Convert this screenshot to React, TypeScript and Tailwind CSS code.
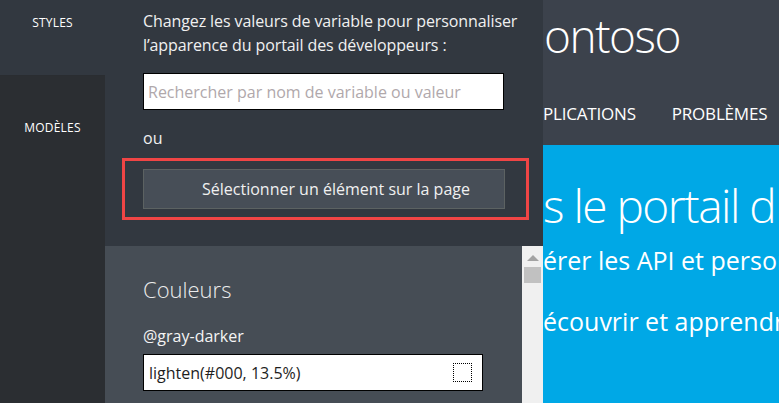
import React from "react";

const NavItem = ({ label, className }: { label: string; className: string }) => (
  <div className={className}>
    <span className="text-[12px] text-white tracking-[0.2px]">{label}</span>
  </div>
);

const Scrollbar = () => (
  <div className="w-[21px] bg-[#f0f0f0] flex flex-col items-center pt-[9px]">
    <svg width="12" height="6" viewBox="0 0 12 6">
      <path d="M6 0 L12 6 L0 6 Z" fill="#a3a3a3" />
    </svg>
    <div className="mt-[6px] w-[17px] h-[16px] bg-[#c1c1c1]" />
  </div>
);

export default function App() {
  return (
    <div className="flex w-[779px] h-[403px] overflow-hidden font-['Open_Sans',sans-serif]">
      {/* left nav */}
      <div className="w-[105px] flex flex-col shrink-0">
        <NavItem
          label="STYLES"
          className="h-[76px] bg-[#323840] flex justify-center pt-[14px] border-b border-[#2a2d31]"
        />
        <NavItem
          label="MODÈLES"
          className="flex-1 bg-[#2b2e32] flex justify-center pt-[43px]"
        />
      </div>

      {/* editor panel */}
      <div className="w-[438px] flex flex-col shrink-0">
        <div className="h-[246px] bg-[#323840] pl-[38px] pt-[9px]">
          <p className="text-[16px] leading-[24px] text-[#f0f0f0] tracking-[-0.1px]">
            Changez les valeurs de variable pour personnaliser
            <br />
            l’apparence du portail des développeurs :
          </p>
          <input
            className="mt-[16px] w-[361px] h-[37px] bg-white border border-black px-[4px] text-[16px] placeholder:text-[#b0a8ab] outline-none"
            placeholder="Rechercher par nom de variable ou valeur"
          />
          <div className="mt-[16px] text-[16px] leading-[24px] text-[#f0f0f0]">ou</div>
          <div className="mt-[8px] ml-[-21px] w-[407px] border-[3px] border-[#f04545] pl-[18px] pr-[21px] py-[8px]">
            <button className="w-[362px] h-[40px] bg-[#474e57] border border-[#5c6262] text-[16px] text-[#f0f0f0] text-left pl-[58px]">
              Sélectionner un élément sur la page
            </button>
          </div>
        </div>
        <div className="flex-1 flex">
          <div className="flex-1 bg-[#464d55] pl-[38px] pt-[28px]">
            <h3 className="text-[22px] leading-[30px] font-light text-[#ececec]">Couleurs</h3>
            <div className="mt-[20px] text-[16px] leading-[24px] text-[#f4f4f4]">@gray-darker</div>
            <div className="mt-[6px] w-[340px] h-[37px] bg-white border border-black flex items-center justify-between pl-[5px] pr-[10px]">
              <span className="text-[16px] text-[#1e1e1e]">lighten(#000, 13.5%)</span>
              <span className="w-[19px] h-[19px] border border-dotted border-black" />
            </div>
          </div>
          <Scrollbar />
        </div>
      </div>

      {/* site preview */}
      <div className="flex-1 flex flex-col overflow-hidden">
        <div className="h-[145px] bg-[#3c424c] flex flex-col">
          <div className="h-[86px] pl-[1px] text-[46px] font-light leading-[70px] tracking-[-1.5px] text-white">
            ontoso
          </div>
          <div className="flex gap-[36px] text-[17px] text-white whitespace-nowrap pt-[15px] tracking-[-0.2px]">
            <span>PLICATIONS</span>
            <span>PROBLÈMES</span>
          </div>
        </div>
        <div className="flex-1 bg-[#00a8e6] text-white whitespace-nowrap">
          <div className="mt-[30px] text-[46px] font-light leading-[60px] tracking-[-1.5px]">
            s le portail d
          </div>
          <div className="mt-[8px] text-[25px] leading-[34px]">érer les API et person</div>
          <div className="mt-[27px] text-[25px] leading-[34px]">écouvrir et apprendr</div>
        </div>
      </div>
    </div>
  );
}
